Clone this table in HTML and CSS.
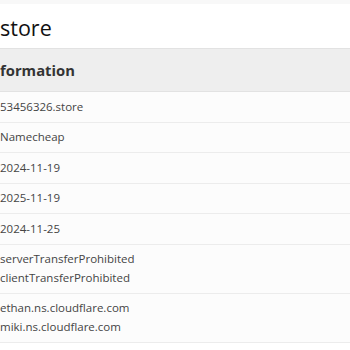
FILE: index.html
```html
<!DOCTYPE html>
<html>
<head>
<meta charset="utf-8">
<link rel="stylesheet" href="styles.css">
</head>
<body>
<div class="topband"></div>
<h1 class="title">store</h1>
<section class="info">
  <div class="info-head">formation</div>
  <div class="row">53456326.store</div>
  <div class="row">Namecheap</div>
  <div class="row">2024-11-19</div>
  <div class="row">2025-11-19</div>
  <div class="row">2024-11-25</div>
  <div class="row">serverTransferProhibited<br>clientTransferProhibited</div>
  <div class="row">ethan.ns.cloudflare.com<br>miki.ns.cloudflare.com</div>
</section>
</body>
</html>
```
FILE: styles.css
```css
html, body {
  margin: 0;
  padding: 0;
  background: #ffffff;
}
body {
  font-family: "Open Sans", "Noto Sans", sans-serif;
  color: #444;
}
.topband {
  height: 4px;
  background: #f8f8f8;
}
.title {
  margin: 0;
  padding: 9px 0 0 0;
  height: 44px;
  box-sizing: border-box;
  font-size: 21.5px;
  line-height: 30px;
  font-weight: 400;
  color: #111;
}
.info {
  display: flex;
  flex-direction: column;
}
.info-head {
  background: #eeeeee;
  border-top: 1px solid #e2e2e2;
  border-bottom: 1px solid #e2e2e2;
  height: 44px;
  box-sizing: border-box;
  display: flex;
  align-items: center;
  font-size: 14.8px;
  font-weight: 700;
  color: #333;
}
.row {
  background: #fcfcfc;
  border-bottom: 1px solid #ececec;
  padding: 5.5px 0;
  font-size: 11.5px;
  line-height: 18.5px;
  color: #444;
}
```
